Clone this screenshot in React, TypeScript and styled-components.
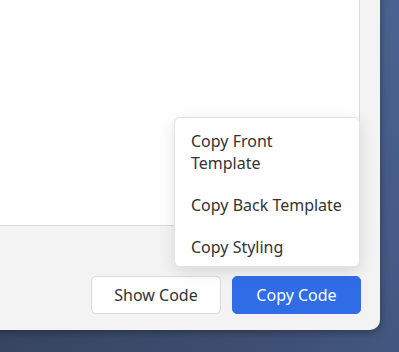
import React from 'react'
import styled, { createGlobalStyle } from 'styled-components'

const GlobalStyle = createGlobalStyle`
  html, body {
    margin: 0;
    padding: 0;
    width: 100%;
    height: 100%;
    overflow: hidden;
  }
  body {
    background: linear-gradient(60deg, #37455f 0%, #3e4f74 45%, #4b6392 100%);
    font-family: 'Noto Sans', 'Open Sans', sans-serif;
  }
`

const Page = styled.main`
  width: 399px;
  height: 352px;
  display: flex;
  align-items: flex-start;
  justify-content: flex-start;
`

const Dialog = styled.section`
  margin: -40px 0 0 -40px;
  width: 420px;
  height: 370px;
  box-sizing: border-box;
  padding: 20px 20px 0 20px;
  background-color: #f3f3f3;
  border-radius: 10px;
  box-shadow: 0 2px 8px rgba(0, 0, 0, 0.35);
  display: flex;
  flex-direction: column;
`

const Editor = styled.div`
  flex: 1;
  background-color: #ffffff;
  border: 1px solid #dadada;
  border-radius: 3px;
`

const Footer = styled.footer`
  display: flex;
  justify-content: flex-end;
  align-items: center;
  gap: 11px;
  margin-right: -1px;
  padding: 50px 0 16px 0;
`

const Button = styled.button<{ $primary?: boolean }>`
  height: 38px;
  box-sizing: border-box;
  padding: 0 22px;
  border-radius: 5px;
  font-family: inherit;
  font-size: 16px;
  cursor: pointer;
  color: ${(p) => (p.$primary ? '#ffffff' : '#333333')};
  background-color: ${(p) => (p.$primary ? '#2f6ce6' : '#ffffff')};
  border: 1px solid ${(p) => (p.$primary ? '#2f6ce6' : '#dadada')};
`

const ShowButton = styled(Button)`
  width: 130px;
`

const CopyButton = styled(Button)`
  width: 129px;
`

const MenuAnchor = styled.div`
  position: relative;
  display: flex;
`

// dropdown opened above the Copy Code button
const Menu = styled.ul`
  position: absolute;
  right: 1px;
  bottom: calc(100% + 9px);
  width: 186px;
  box-sizing: border-box;
  margin: 0;
  padding: 0;
  list-style: none;
  background-color: #ffffff;
  border: 1px solid #e2e2e2;
  border-radius: 6px;
  box-shadow: 0 4px 16px rgba(0, 0, 0, 0.12);
`

const MenuItem = styled.li`
  padding: 12px 16px 8px;
  font-size: 16px;
  line-height: 22px;
  color: #333333;
  cursor: pointer;
`

const menuItems = ['Copy Front Template', 'Copy Back Template', 'Copy Styling']

export default function App() {
  return (
    <>
      <GlobalStyle />
      <Page>
        <Dialog>
          <Editor />
          <Footer>
            <ShowButton>Show Code</ShowButton>
            <MenuAnchor>
              <Menu>
                {menuItems.map((item) => (
                  <MenuItem key={item}>{item}</MenuItem>
                ))}
              </Menu>
              <CopyButton $primary>Copy Code</CopyButton>
            </MenuAnchor>
          </Footer>
        </Dialog>
      </Page>
    </>
  )
}
